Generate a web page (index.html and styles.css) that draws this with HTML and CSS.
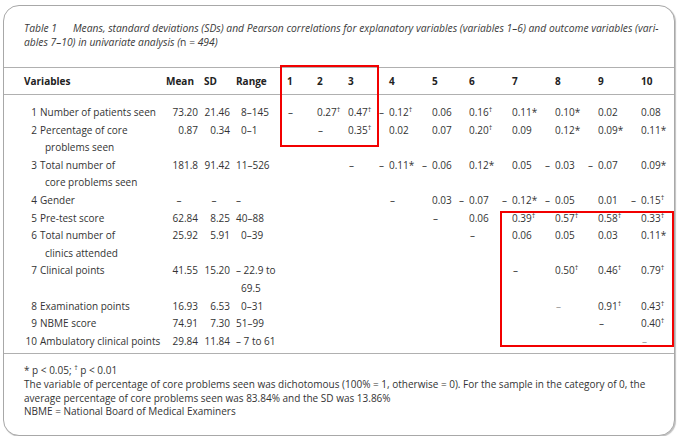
FILE: index.html
```html
<!DOCTYPE html>
<html>
<head>
<meta charset="utf-8">
<link rel="stylesheet" href="styles.css">
</head>
<body>
<div class="card">
  <div class="caption">
    <div class="cap-line"><span class="tno">Table 1</span>Means, standard deviations (SDs) and Pearson correlations for explanatory variables (variables 1–6) and outcome variables (vari-</div>
    <div class="cap-line">ables 7–10) in univariate analysis (<span class="up">n</span> = 494)</div>
  </div>
  <table class="tbl">
    <colgroup>
      <col class="w-lab"><col class="w-mean"><col class="w-sd"><col class="w-range">
      <col class="w-c1"><col class="w-c2"><col class="w-c3"><col class="w-c4"><col class="w-c5">
      <col class="w-c6"><col class="w-c7"><col class="w-c8"><col class="w-c9"><col class="w-c10">
    </colgroup>
    <thead>
      <tr>
        <th class="lab">Variables</th><th class="h">Mean</th><th class="h">SD</th><th class="h">Range</th>
        <th>1</th><th>2</th><th>3</th><th>4</th><th>5</th><th>6</th><th>7</th><th>8</th><th>9</th><th>10</th>
      </tr>
    </thead>
    <tbody>
      <tr>
        <td class="lab"><span class="n">1</span>Number of patients seen</td>
        <td class="r">73.20</td><td class="r">21.46</td><td class="rg ind">8–145</td>
        <td class="d">–</td><td>0.27<sup>†</sup></td><td>0.47<sup>†</sup></td><td><span class="neg">– </span>0.12<sup>†</sup></td><td>0.06</td><td>0.16<sup>†</sup></td><td>0.11*</td><td>0.10*</td><td>0.02</td><td>0.08</td>
      </tr>
      <tr>
        <td class="lab"><span class="n">2</span>Percentage of core<div class="cont">problems seen</div></td>
        <td class="r">0.87</td><td class="r">0.34</td><td class="rg ind">0–1</td>
        <td></td><td class="d">–</td><td>0.35<sup>†</sup></td><td>0.02</td><td>0.07</td><td>0.20<sup>†</sup></td><td>0.09</td><td>0.12*</td><td>0.09*</td><td>0.11*</td>
      </tr>
      <tr>
        <td class="lab"><span class="n">3</span>Total number of<div class="cont">core problems seen</div></td>
        <td class="r">181.8</td><td class="r">91.42</td><td class="rg">11–526</td>
        <td></td><td></td><td class="d">–</td><td><span class="neg">– </span>0.11*</td><td><span class="neg">– </span>0.06</td><td>0.12*</td><td>0.05</td><td><span class="neg">– </span>0.03</td><td><span class="neg">– </span>0.07</td><td>0.09*</td>
      </tr>
      <tr>
        <td class="lab"><span class="n">4</span>Gender</td>
        <td class="c">–</td><td class="c">–</td><td class="rg">–</td>
        <td></td><td></td><td></td><td class="d">–</td><td>0.03</td><td><span class="neg">– </span>0.07</td><td><span class="neg">– </span>0.12*</td><td><span class="neg">– </span>0.05</td><td>0.01</td><td><span class="neg">– </span>0.15<sup>†</sup></td>
      </tr>
      <tr>
        <td class="lab"><span class="n">5</span>Pre-test score</td>
        <td class="r">62.84</td><td class="r">8.25</td><td class="rg">40–88</td>
        <td></td><td></td><td></td><td></td><td class="d">–</td><td>0.06</td><td>0.39<sup>†</sup></td><td>0.57<sup>†</sup></td><td>0.58<sup>†</sup></td><td>0.33<sup>†</sup></td>
      </tr>
      <tr>
        <td class="lab"><span class="n">6</span>Total number of<div class="cont">clinics attended</div></td>
        <td class="r">25.92</td><td class="r">5.91</td><td class="rg ind">0–39</td>
        <td></td><td></td><td></td><td></td><td></td><td class="d">–</td><td>0.06</td><td>0.05</td><td>0.03</td><td>0.11*</td>
      </tr>
      <tr>
        <td class="lab"><span class="n">7</span>Clinical points</td>
        <td class="r">41.55</td><td class="r">15.20</td><td class="rg">– 22.9 to<div class="ind">69.5</div></td>
        <td></td><td></td><td></td><td></td><td></td><td></td><td class="d">–</td><td>0.50<sup>†</sup></td><td>0.46<sup>†</sup></td><td>0.79<sup>†</sup></td>
      </tr>
      <tr>
        <td class="lab"><span class="n">8</span>Examination points</td>
        <td class="r">16.93</td><td class="r">6.53</td><td class="rg ind">0–31</td>
        <td></td><td></td><td></td><td></td><td></td><td></td><td></td><td class="d light">–</td><td>0.91<sup>†</sup></td><td>0.43<sup>†</sup></td>
      </tr>
      <tr>
        <td class="lab"><span class="n">9</span>NBME score</td>
        <td class="r">74.91</td><td class="r">7.30</td><td class="rg">51–99</td>
        <td></td><td></td><td></td><td></td><td></td><td></td><td></td><td></td><td class="d">–</td><td>0.40<sup>†</sup></td>
      </tr>
      <tr>
        <td class="lab"><span class="n">10</span>Ambulatory clinical points</td>
        <td class="r">29.84</td><td class="r">11.84</td><td class="rg">– 7 to 61</td>
        <td></td><td></td><td></td><td></td><td></td><td></td><td></td><td></td><td></td><td class="d light">–</td>
      </tr>
    </tbody>
  </table>
  <div class="notes">
    <div>* p &lt; 0.05; <sup>†</sup> p &lt; 0.01</div>
    <div>The variable of percentage of core problems seen was dichotomous (100% = 1, otherwise = 0). For the sample in the category of 0, the</div>
    <div>average percentage of core problems seen was 83.84% and the SD was 13.86%</div>
    <div>NBME = National Board of Medical Examiners</div>
  </div>
  <div class="mark mark-a"></div>
  <div class="mark mark-b"></div>
</div>
</body>
</html>
```
FILE: styles.css
```css
* { box-sizing: border-box; }
html, body { margin: 0; padding: 0; background: #fff; }
body {
  font-family: "Open Sans", "Noto Sans", sans-serif;
  font-size: 10px;
  color: #333;
}
.card {
  position: relative;
  margin: 5px 0 0 3px;
  width: 672px;
  height: 431px;
  border: 1px solid #a8a8a8;
  border-radius: 16px;
  box-shadow: 1px 1px 1px rgba(0,0,0,0.25);
  background: #fff;
}
.caption {
  padding: 15px 0 0 20px;
  font-style: italic;
  font-size: 10.3px;
  line-height: 14px;
  color: #3a3a3a;
  white-space: nowrap;
}
.caption .tno { margin-right: 16px; }
.caption .up { font-style: normal; }
.tbl {
  margin-top: 18px;
  width: 670px;
  border-collapse: collapse;
  table-layout: fixed;
}
.w-lab { width: 156px; }
.w-mean { width: 38px; }
.w-sd { width: 32px; }
.w-range { width: 57px; }
.w-c1 { width: 30px; }
.w-c2 { width: 31px; }
.w-c3 { width: 41px; }
.w-c4 { width: 43px; }
.w-c5 { width: 37px; }
.w-c6 { width: 43px; }
.w-c7 { width: 43px; }
.w-c8 { width: 43px; }
.w-c9 { width: 43px; }
.w-c10 { width: 33px; }
.tbl thead tr { border-top: 1px solid #b0b0b0; border-bottom: 1px solid #b0b0b0; }
.tbl th {
  font-weight: 700;
  text-align: left;
  padding: 5px 0;
  line-height: 16px;
  color: #222;
}
.tbl th.lab { padding-left: 20px; }
.tbl th.h { padding-left: 6px; }
.tbl td {
  padding: 0;
  line-height: 17.6px;
  vertical-align: top;
  white-space: nowrap;
  text-align: left;
}
.tbl tbody tr:first-child td { padding-top: 9px; }
.tbl tbody tr:last-child td { padding-bottom: 3px; }
.tbl tbody tr:last-child { border-bottom: 1px solid #b0b0b0; }
.tbl td.lab { padding-left: 20px; }
.n { display: inline-block; width: 13px; text-align: right; margin-right: 3px; }
.cont { padding-left: 21px; }
.tbl td.r { text-align: right; }
.tbl td.c { text-align: center; }
.tbl td.rg { padding-left: 6px; }
.tbl td.rg.ind { padding-left: 11px; }
.rg .ind { padding-left: 5px; }
.tbl td.d { padding-left: 1px; }
.tbl td.light { color: #999; }
.neg { display: inline-block; width: 10px; margin-left: -10px; }
sup { font-size: 7px; line-height: 0; vertical-align: 4px; }
.notes {
  padding: 10px 0 0 20px;
  line-height: 13.7px;
  white-space: nowrap;
}
.mark {
  position: absolute;
  border: 2px solid #f20000;
}
.mark-a { left: 276px; top: 59px; width: 99px; height: 82px; }
.mark-b { left: 496px; top: 205px; width: 174px; height: 136px; }
```
